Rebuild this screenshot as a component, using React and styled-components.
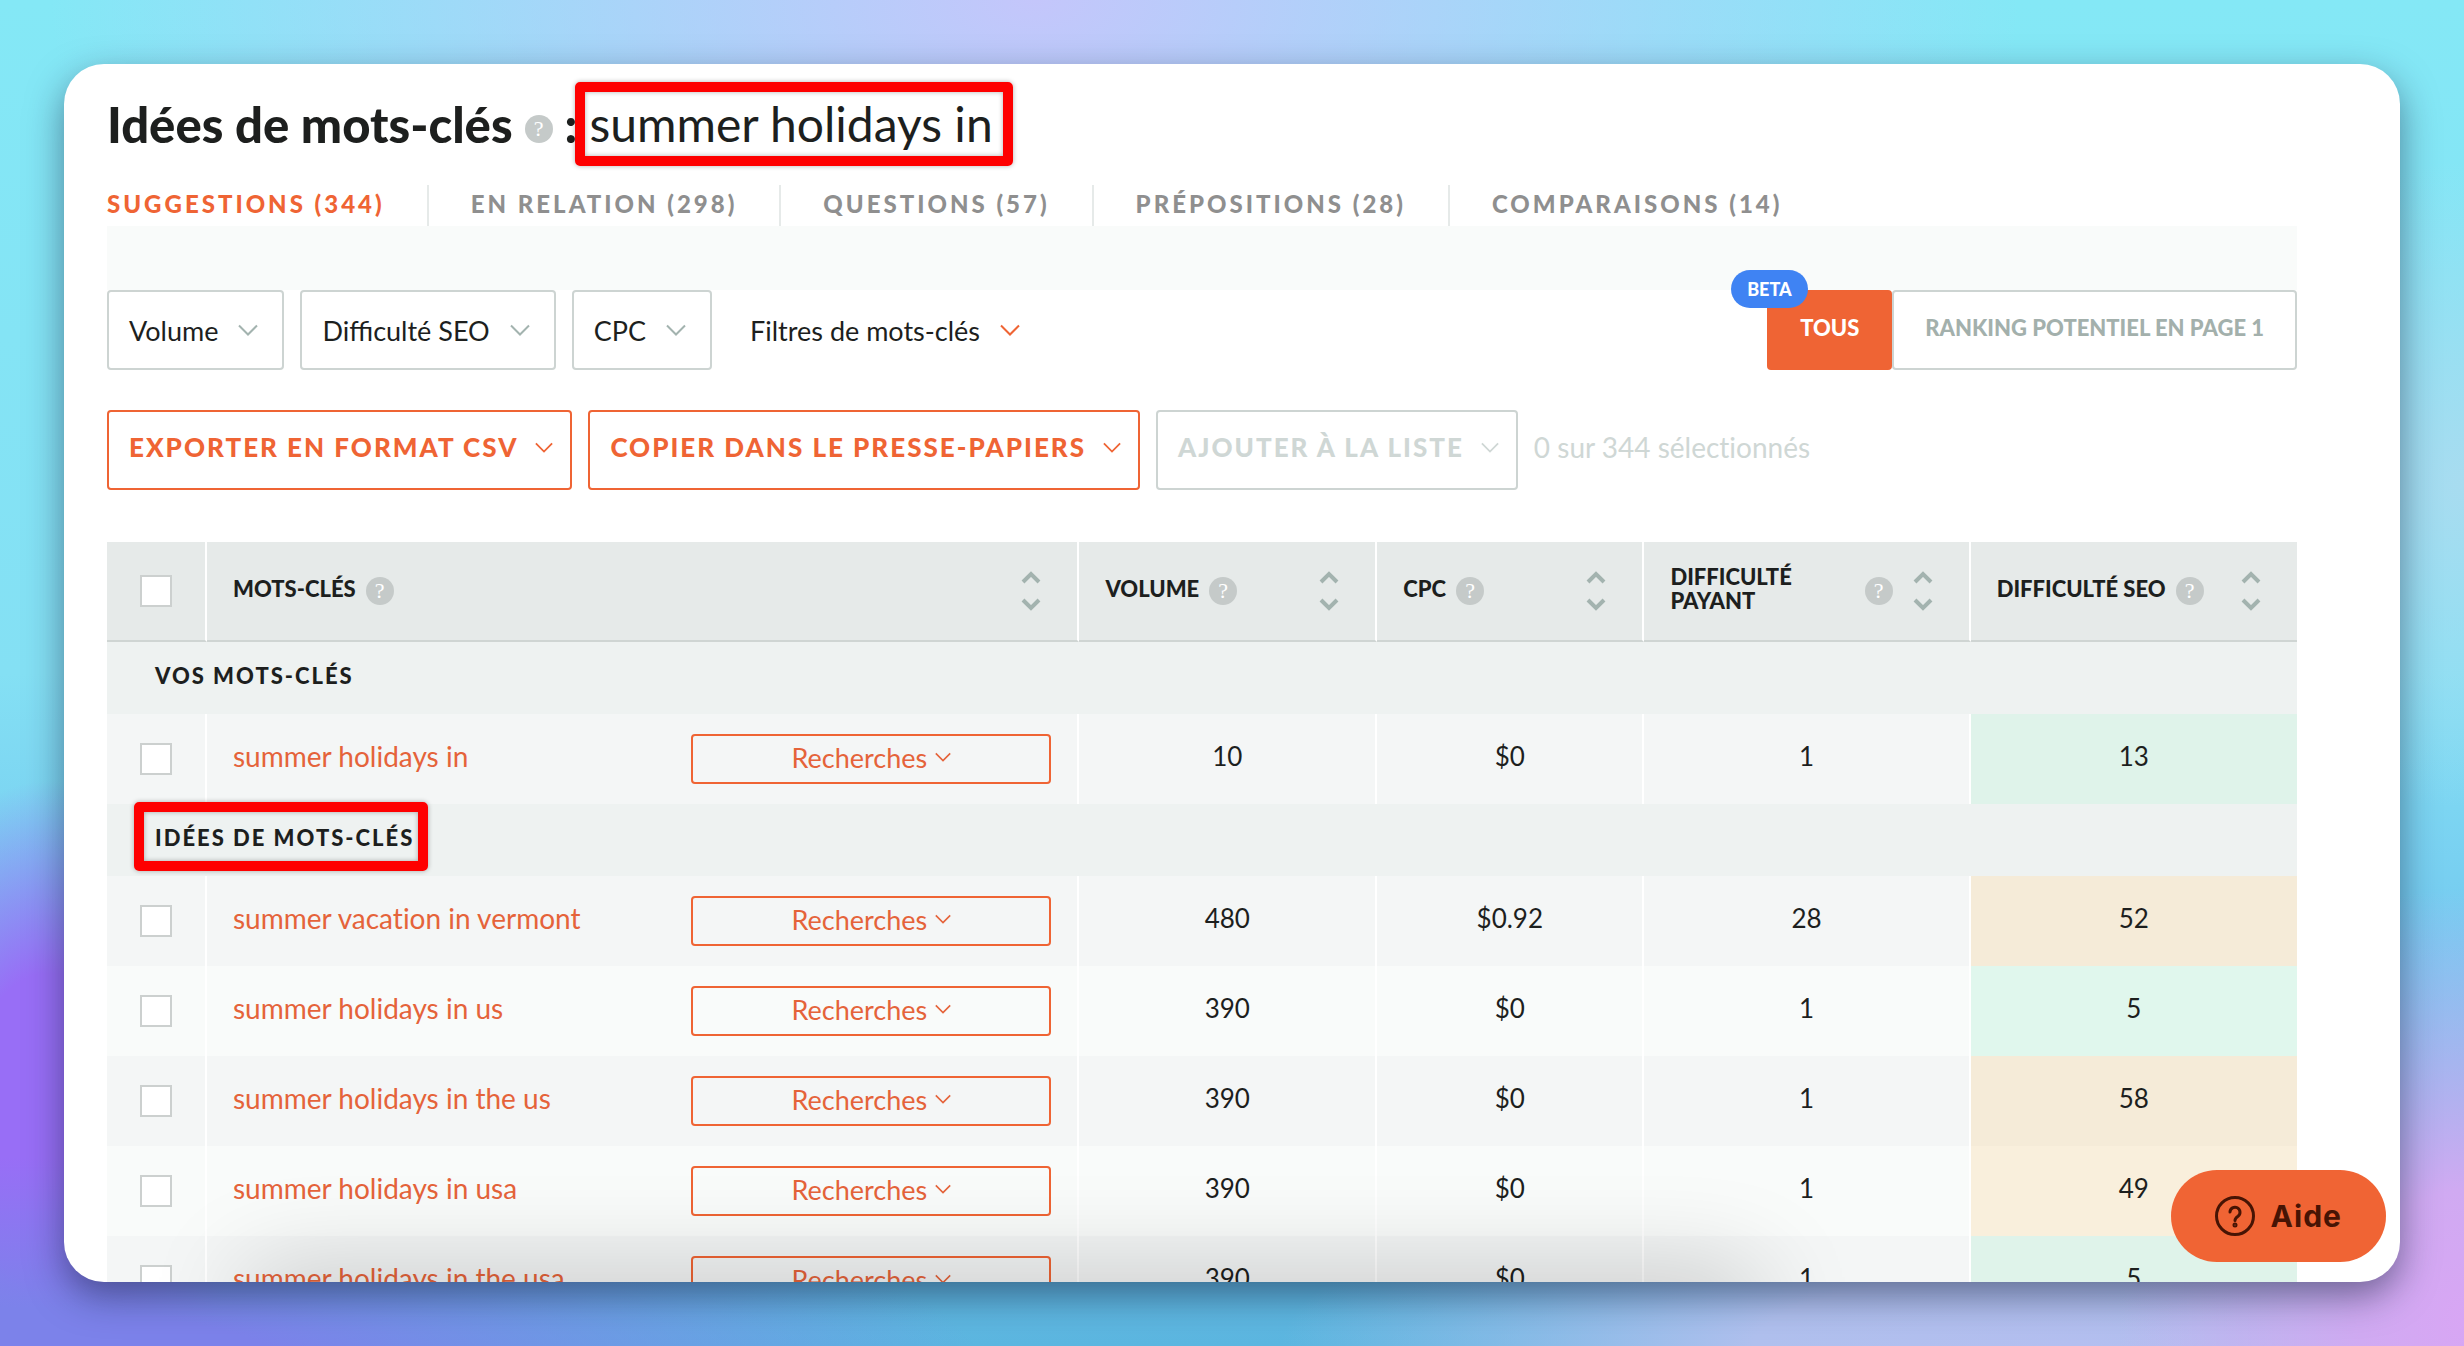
import styled, { createGlobalStyle, css } from "styled-components";

const tabs = [
  { label: "SUGGESTIONS (344)", active: true },
  { label: "EN RELATION (298)" },
  { label: "QUESTIONS (57)" },
  { label: "PRÉPOSITIONS (28)" },
  { label: "COMPARAISONS (14)" },
];

const filters = ["Volume", "Difficulté SEO", "CPC"];

const yourKeywords = [
  { keyword: "summer holidays in", volume: "10", cpc: "$0", paid: "1", seo: "13", level: "easy" },
];

const keywordIdeas = [
  { keyword: "summer vacation in vermont", volume: "480", cpc: "$0.92", paid: "28", seo: "52", level: "medium" },
  { keyword: "summer holidays in us", volume: "390", cpc: "$0", paid: "1", seo: "5", level: "easy" },
  { keyword: "summer holidays in the us", volume: "390", cpc: "$0", paid: "1", seo: "58", level: "medium" },
  { keyword: "summer holidays in usa", volume: "390", cpc: "$0", paid: "1", seo: "49", level: "medium" },
  { keyword: "summer holidays in the usa", volume: "390", cpc: "$0", paid: "1", seo: "5", level: "easy" },
];

function Chevron({ size = 20 }) {
  return (
    <ChevronSvg width={size} height={size / 2 + 2} viewBox="0 0 20 12" aria-hidden="true">
      <path d="M1 1.5 10 10.5 19 1.5" />
    </ChevronSvg>
  );
}

function SortArrows() {
  return (
    <SortButton type="button" aria-label="Trier">
      <svg width="20" height="40" viewBox="0 0 20 40" aria-hidden="true">
        <path d="M2 11 10 3 18 11M2 29 10 37 18 29" />
      </svg>
    </SortButton>
  );
}

function HeaderCell({ children, spread }) {
  return (
    <Th scope="col">
      <HeaderContent>
        <HeaderLabel $spread={spread}>
          <HeaderText>{children}</HeaderText>
          <Help>?</Help>
        </HeaderLabel>
        <SortArrows />
      </HeaderContent>
    </Th>
  );
}

function KeywordRow({ item, shaded }) {
  return (
    <Row $shaded={shaded}>
      <CheckCell>
        <Checkbox type="checkbox" aria-label={item.keyword} />
      </CheckCell>
      <Td>
        <KeywordContent>
          <KeywordLink href="#">{item.keyword}</KeywordLink>
          <SearchButton type="button">
            Recherches
            <Chevron size={16} />
          </SearchButton>
        </KeywordContent>
      </Td>
      <ValueCell>{item.volume}</ValueCell>
      <ValueCell>{item.cpc}</ValueCell>
      <ValueCell>{item.paid}</ValueCell>
      <ScoreCell $level={item.level} $shaded={shaded}>
        {item.seo}
      </ScoreCell>
    </Row>
  );
}

function App() {
  return (
    <Page>
      <GlobalStyle />
      <Card>
        <Title>
          Idées de mots-clés
          <TitleHelp>?</TitleHelp>
          <span>:</span>
          <TitleKeyword>summer holidays in</TitleKeyword>
        </Title>

        <Tabs>
          {tabs.map((tab) => (
            <Tab key={tab.label} href="#" $active={tab.active}>
              {tab.label}
            </Tab>
          ))}
        </Tabs>
        <Band />

        <Toolbar>
          {filters.map((label) => (
            <FilterButton key={label} type="button">
              {label}
              <Chevron />
            </FilterButton>
          ))}
          <KeywordFilters type="button">
            Filtres de mots-clés
            <Chevron />
          </KeywordFilters>
          <Toggle>
            <Badge>BETA</Badge>
            <ToggleButton type="button" $active>
              TOUS
            </ToggleButton>
            <ToggleButton type="button">RANKING POTENTIEL EN PAGE 1</ToggleButton>
          </Toggle>
        </Toolbar>

        <Actions>
          <ActionButton type="button">
            EXPORTER EN FORMAT CSV
            <Chevron size={18} />
          </ActionButton>
          <ActionButton type="button">
            COPIER DANS LE PRESSE-PAPIERS
            <Chevron size={18} />
          </ActionButton>
          <ActionButton type="button" disabled>
            AJOUTER À LA LISTE
            <Chevron size={18} />
          </ActionButton>
          <Selected>0 sur 344 sélectionnés</Selected>
        </Actions>

        <Table>
          <colgroup>
            <CheckCol />
            <col />
            <Col $width={13.6} />
            <Col $width={12.2} />
            <Col $width={14.9} />
            <Col $width={14.9} />
          </colgroup>
          <thead>
            <tr>
              <CheckHeader>
                <Checkbox type="checkbox" aria-label="Tout sélectionner" />
              </CheckHeader>
              <HeaderCell>MOTS-CLÉS</HeaderCell>
              <HeaderCell>VOLUME</HeaderCell>
              <HeaderCell>CPC</HeaderCell>
              <HeaderCell spread>
                DIFFICULTÉ
                <br />
                PAYANT
              </HeaderCell>
              <HeaderCell>DIFFICULTÉ SEO</HeaderCell>
            </tr>
          </thead>
          <tbody>
            <tr>
              <GroupCell colSpan={6}>VOS MOTS-CLÉS</GroupCell>
            </tr>
            {yourKeywords.map((item) => (
              <KeywordRow key={item.keyword} item={item} shaded />
            ))}
            <tr>
              <GroupCell colSpan={6}>
                <GroupHighlight>IDÉES DE MOTS-CLÉS</GroupHighlight>
              </GroupCell>
            </tr>
            {keywordIdeas.map((item, index) => (
              <KeywordRow key={item.keyword} item={item} shaded={index % 2 === 0} />
            ))}
          </tbody>
        </Table>

        <BottomShade />
        <HelpButton type="button">
          <svg width="40" height="44" viewBox="0 0 40 44" aria-hidden="true">
            <circle cx="20" cy="22" r="18.5" />
            <path d="M15 18a5 5 0 1 1 8 4.200c-2 1.400-3 2.200-3 4.300" />
            <circle cx="20" cy="31" r="1" />
          </svg>
          Aide
        </HelpButton>
      </Card>
    </Page>
  );
}

export default App;

const orange = "#ef6434";
const ink = "#1d1f1e";
const line = "#cdd4d2";

const GlobalStyle = createGlobalStyle`
  * {
    box-sizing: border-box;
  }

  body {
    margin: 0;
    color: ${ink};
    font-family: Lato, "Open Sans", sans-serif;
    font-size: 28px;
    font-variant-ligatures: no-common-ligatures;
  }

  button {
    margin: 0;
    font-family: inherit;
    cursor: pointer;
  }
`;

const Page = styled.div`
  display: flex;
  height: 100vh;
  padding: 64px;
  background:
    radial-gradient(ellipse 40% 40% at 42% 0%, #c4c6fb 0%, rgba(196, 198, 251, 0) 100%),
    radial-gradient(ellipse 40% 16% at 0% 102%, #7c82ea 0%, #7c82ea 30%, rgba(124, 130, 234, 0) 100%),
    radial-gradient(ellipse 8% 26% at 2% 84%, #986ef6 0%, #986ef6 45%, rgba(152, 110, 246, 0) 100%),
    radial-gradient(ellipse 14% 32% at 100% 98%, #d8a6f4 0%, #d0aaf2 30%, rgba(208, 170, 242, 0) 100%),
    radial-gradient(ellipse 32% 14% at 84% 100%, #b4bff0 0%, #b0c0ee 40%, rgba(176, 192, 238, 0) 100%),
    radial-gradient(ellipse 12% 24% at 100% 36%, #a8dcf0 0%, rgba(168, 220, 240, 0) 100%),
    linear-gradient(180deg, #84e8f6 0%, #84e0f4 50%, #74caf0 70%, #5cb6e0 100%);
`;

const Card = styled.main`
  position: relative;
  flex: 1;
  overflow: hidden;
  padding: 0 103px 0 43px;
  border-radius: 40px;
  background: #fff;
  box-shadow: 0 14px 36px rgba(20, 30, 60, 0.5);
`;

const Title = styled.h1`
  display: flex;
  align-items: center;
  gap: 12px;
  margin: 0;
  padding: 30px 0 31px;
  font-size: 49px;
  font-weight: 900;
  line-height: 60px;
`;

const highlight = css`
  position: relative;

  &::after {
    content: "";
    position: absolute;
    border: 10px solid #fe0000;
    border-radius: 5px;
    box-shadow: 0 0 5px rgba(0, 0, 0, 0.3), inset 0 0 5px rgba(0, 0, 0, 0.3);
    pointer-events: none;
  }
`;

const TitleKeyword = styled.span`
  ${highlight}
  font-size: 48px;
  font-weight: 400;

  &::after {
    inset: -12px -20px -12px -14px;
  }
`;

const Help = styled.span`
  flex: none;
  width: 28px;
  height: 28px;
  border-radius: 50%;
  background: #c5cac9;
  color: #fff;
  font-family: "Liberation Serif", serif;
  font-size: 22px;
  font-weight: 400;
  line-height: 28px;
  text-align: center;
`;

const TitleHelp = styled(Help)`
  margin-top: 10px;
`;

const Tabs = styled.nav`
  display: flex;
`;

const Tab = styled.a`
  padding: 0 42px 4px;
  border-right: 2px solid #e6eae9;
  color: ${({ $active }) => ($active ? orange : "#8f8f8f")};
  font-size: 24px;
  font-weight: 900;
  letter-spacing: 3px;
  line-height: 37px;
  text-decoration: none;

  &:first-child {
    padding-left: 0;
  }

  &:last-child {
    border-right: 0;
  }
`;

const Band = styled.div`
  height: 64px;
  background: #f9fbfa;
`;

const Toolbar = styled.div`
  display: flex;
  gap: 16px;
`;

const FilterButton = styled.button`
  display: flex;
  align-items: center;
  gap: 20px;
  height: 80px;
  padding: 0 24px 0 20px;
  border: 2px solid ${line};
  border-radius: 4px;
  background: #fff;
  color: ${ink};
  font-size: 27px;

  svg {
    color: #a3b3af;
  }
`;

const KeywordFilters = styled(FilterButton)`
  border-color: transparent;

  svg {
    color: ${orange};
  }
`;

const ChevronSvg = styled.svg`
  flex: none;
  fill: none;
  stroke: currentColor;
  stroke-width: 2;
`;

const Toggle = styled.div`
  position: relative;
  display: flex;
  margin-left: auto;
`;

const ToggleButton = styled.button`
  height: 80px;
  padding: 0 31px 6px;
  border: 2px solid ${({ $active }) => ($active ? orange : line)};
  border-radius: 4px;
  background: ${({ $active }) => ($active ? orange : "#fff")};
  color: ${({ $active }) => ($active ? "#fff" : "#a3b0ac")};
  font-size: 22px;
  font-weight: 900;
`;

const Badge = styled.span`
  position: absolute;
  top: -20px;
  left: -36px;
  padding: 0 16px;
  border-radius: 19px;
  background: #3f83f3;
  color: #fff;
  font-size: 18px;
  font-weight: 900;
  line-height: 38px;
`;

const Actions = styled.div`
  display: flex;
  align-items: center;
  gap: 16px;
  margin: 40px 0 52px;
`;

const ActionButton = styled.button`
  display: flex;
  align-items: center;
  gap: 17px;
  height: 80px;
  padding: 0 17px 6px 20px;
  border: 2px solid ${orange};
  border-radius: 4px;
  background: #fff;
  color: ${orange};
  font-size: 26px;
  font-weight: 900;
  letter-spacing: 2px;

  &:disabled {
    border-color: ${line};
    color: #cfd7d5;
    cursor: default;
  }
`;

const Selected = styled.span`
  padding-bottom: 6px;
  color: #cfd7d5;
`;

const Table = styled.table`
  width: 100%;
  table-layout: fixed;
  border-spacing: 0;
`;

const CheckCol = styled.col`
  width: 100px;
`;

const Col = styled.col`
  width: ${({ $width }) => $width}%;
`;

const Th = styled.th`
  height: 100px;
  padding: 0 36px 0 26px;
  border-right: 2px solid #fff;
  border-bottom: 2px solid #cfd5d3;
  background: #e6eae9;
  text-align: left;

  &:last-child {
    border-right: 0;
  }
`;

const CheckHeader = styled(Th)`
  padding: 0;
  text-align: center;
`;

const HeaderContent = styled.div`
  display: flex;
  align-items: center;
  justify-content: space-between;
  gap: 20px;
`;

const HeaderLabel = styled.div`
  display: flex;
  flex: 1;
  align-items: center;
  justify-content: ${({ $spread }) => ($spread ? "space-between" : "flex-start")};
  gap: 10px;
  font-size: 22px;
  font-weight: 900;
  line-height: 24px;
  white-space: nowrap;
`;

const HeaderText = styled.span`
  padding-bottom: 4px;
`;

const SortButton = styled.button`
  display: flex;
  padding: 0;
  border: 0;
  background: none;

  svg {
    fill: none;
    stroke: #a3b3af;
    stroke-width: 4;
  }
`;

const GroupCell = styled.td`
  height: 72px;
  padding: 0 48px 6px;
  background: #eef2f1;
  font-size: 22px;
  font-weight: 900;
  letter-spacing: 2px;
`;

const GroupHighlight = styled.span`
  ${highlight}

  &::after {
    inset: -22px -14px -20px -21px;
  }
`;

const Row = styled.tr`
  background: ${({ $shaded }) => ($shaded ? "#f4f6f6" : "#f9fbfa")};
`;

const Td = styled.td`
  height: 90px;
  padding: 0 26px;
  border-right: 2px solid #fff;

  &:last-child {
    border-right: 0;
  }
`;

const CheckCell = styled(Td)`
  padding: 0;
  text-align: center;
`;

const Checkbox = styled.input`
  appearance: none;
  display: block;
  width: 32px;
  height: 32px;
  margin: 0 auto;
  border: 2px solid #ccd0cf;
  background: #fff;
`;

const KeywordContent = styled.div`
  display: flex;
  align-items: center;
  justify-content: space-between;
`;

const KeywordLink = styled.a`
  padding-bottom: 6px;
  color: #e5633a;
  text-decoration: none;
`;

const SearchButton = styled.button`
  display: flex;
  align-items: center;
  justify-content: center;
  gap: 8px;
  width: 360px;
  height: 50px;
  padding: 0 0 4px;
  border: 2px solid ${orange};
  border-radius: 4px;
  background: transparent;
  color: #e5633a;
  font-size: 27px;
`;

const ValueCell = styled(Td)`
  padding-bottom: 6px;
  font-size: 26px;
  text-align: center;
`;

const scoreColors = {
  easy: ["#e0f7ed", "#dff3ea"],
  medium: ["#f9efdc", "#f5ebd8"],
};

const ScoreCell = styled(ValueCell)`
  background: ${({ $level, $shaded }) => scoreColors[$level][$shaded ? 1 : 0]};
`;

const BottomShade = styled.div`
  position: absolute;
  right: 660px;
  bottom: -50px;
  left: 200px;
  height: 40px;
  box-shadow: 0 0 100px 16px rgba(0, 0, 0, 0.22);
  pointer-events: none;
`;

const HelpButton = styled.button`
  position: absolute;
  right: 14px;
  bottom: 20px;
  display: flex;
  align-items: center;
  gap: 16px;
  height: 92px;
  padding: 0 44px;
  border: 0;
  border-radius: 46px;
  background: #f06434;
  color: #471404;
  font-family: Inter, sans-serif;
  font-size: 30px;
  font-weight: 700;
  letter-spacing: 1px;

  svg {
    fill: none;
    stroke: currentColor;
    stroke-width: 3;
    stroke-linecap: round;
  }
`;
